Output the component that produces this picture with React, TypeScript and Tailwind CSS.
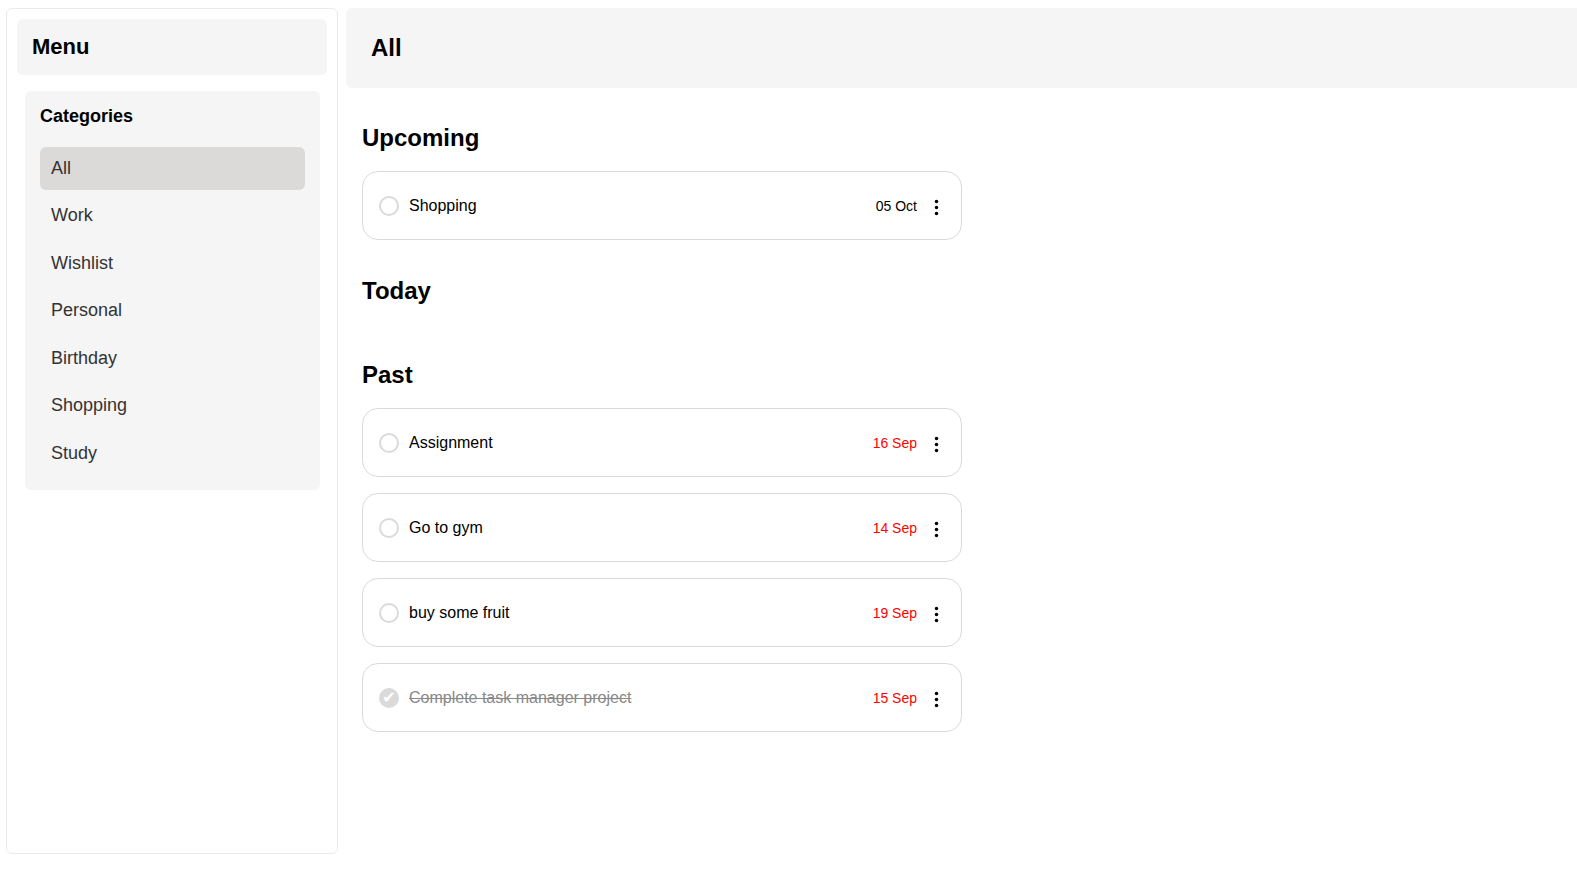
import { useState } from "react";

type Task = { id: number; title: string; date: string; done?: boolean };
type Section = { name: string; overdue?: boolean; tasks: Task[] };

const categories = ["All", "Work", "Wishlist", "Personal", "Birthday", "Shopping", "Study"];

const initialSections: Section[] = [
  { name: "Upcoming", tasks: [{ id: 1, title: "Shopping", date: "05 Oct" }] },
  { name: "Today", tasks: [] },
  {
    name: "Past",
    overdue: true,
    tasks: [
      { id: 2, title: "Assignment", date: "16 Sep" },
      { id: 3, title: "Go to gym", date: "14 Sep" },
      { id: 4, title: "buy some fruit", date: "19 Sep" },
      { id: 5, title: "Complete task manager project", date: "15 Sep", done: true },
    ],
  },
];

function MoreIcon() {
  return (
    <svg width="18" height="18" viewBox="0 0 18 18" fill="currentColor" aria-hidden="true">
      <circle cx="9.5" cy="2.5" r="1.75" />
      <circle cx="9.5" cy="8.5" r="1.75" />
      <circle cx="9.5" cy="14.5" r="1.75" />
    </svg>
  );
}

function TaskCard({ task, overdue }: { task: Task; overdue?: boolean }) {
  const [done, setDone] = useState(Boolean(task.done));
  const id = `task-${task.id}`;
  return (
    <li className="flex h-[69px] items-center rounded-2xl border border-[#dadada] px-4">
      <span className="relative flex size-5 shrink-0">
        <input
          id={id}
          type="checkbox"
          checked={done}
          onChange={() => setDone(!done)}
          className="size-5 cursor-pointer appearance-none rounded-full border-2 border-[#dadada] checked:bg-[#dadada]"
        />
        {done && (
          <span className="pointer-events-none absolute inset-0 text-center font-['DejaVu_Sans',sans-serif] text-base leading-5 text-white">
            ✔
          </span>
        )}
      </span>
      <label
        htmlFor={id}
        className={done ? "ml-[10px] flex-1 text-base text-[#888888] line-through" : "ml-[10px] flex-1 text-base text-black"}
      >
        {task.title}
      </label>
      <span className={overdue ? "text-sm text-[#ff0000]" : "text-sm text-black"}>
        {task.date}
      </span>
      <button type="button" aria-label={`Options for ${task.title}`} className="ml-[10px] cursor-pointer pt-1">
        <MoreIcon />
      </button>
    </li>
  );
}

export default function App() {
  const [active, setActive] = useState("All");
  return (
    <div className="flex min-h-screen gap-2 bg-white pt-2 pl-[6px] font-['Liberation_Sans',Arial,sans-serif] text-black">
      <aside className="mb-[33px] w-[332px] shrink-0 rounded-md border border-[#ebebeb] p-[10px]">
        <h2 className="rounded-md bg-[#f5f5f5] px-[15px] py-3 text-[22px] leading-8 font-bold">Menu</h2>
        <div className="mt-4 mr-[7px] ml-2 rounded-md bg-[#f5f5f5] p-[15px]">
          <h3 className="text-lg leading-5 font-bold">Categories</h3>
          <nav className="mt-[21px] flex h-[328px] flex-col justify-between">
            {categories.map((name) => (
              <button
                key={name}
                type="button"
                onClick={() => setActive(name)}
                className={
                  name === active
                    ? "h-[43px] cursor-pointer rounded-md bg-[#dbdad8] px-[11px] pb-0.5 text-left text-lg text-[#333333]"
                    : "h-[43px] cursor-pointer rounded-md px-[11px] pb-0.5 text-left text-lg text-[#333333]"
                }
              >
                {name}
              </button>
            ))}
          </nav>
        </div>
      </aside>
      <main className="min-w-0 flex-1">
        <header className="flex h-20 items-center rounded-l-md bg-[#f5f5f5] px-[25px]">
          <h1 className="text-2xl font-bold">{active}</h1>
        </header>
        <div className="max-w-[616px] pt-[34px] pl-4">
          {initialSections.map((section) => (
            <section key={section.name} className="mb-[35px]">
              <h2 className="mb-[17px] text-2xl font-bold">{section.name}</h2>
              <ul className="flex flex-col gap-4">
                {section.tasks.map((task) => (
                  <TaskCard key={task.id} task={task} overdue={section.overdue} />
                ))}
              </ul>
            </section>
          ))}
        </div>
      </main>
    </div>
  );
}
